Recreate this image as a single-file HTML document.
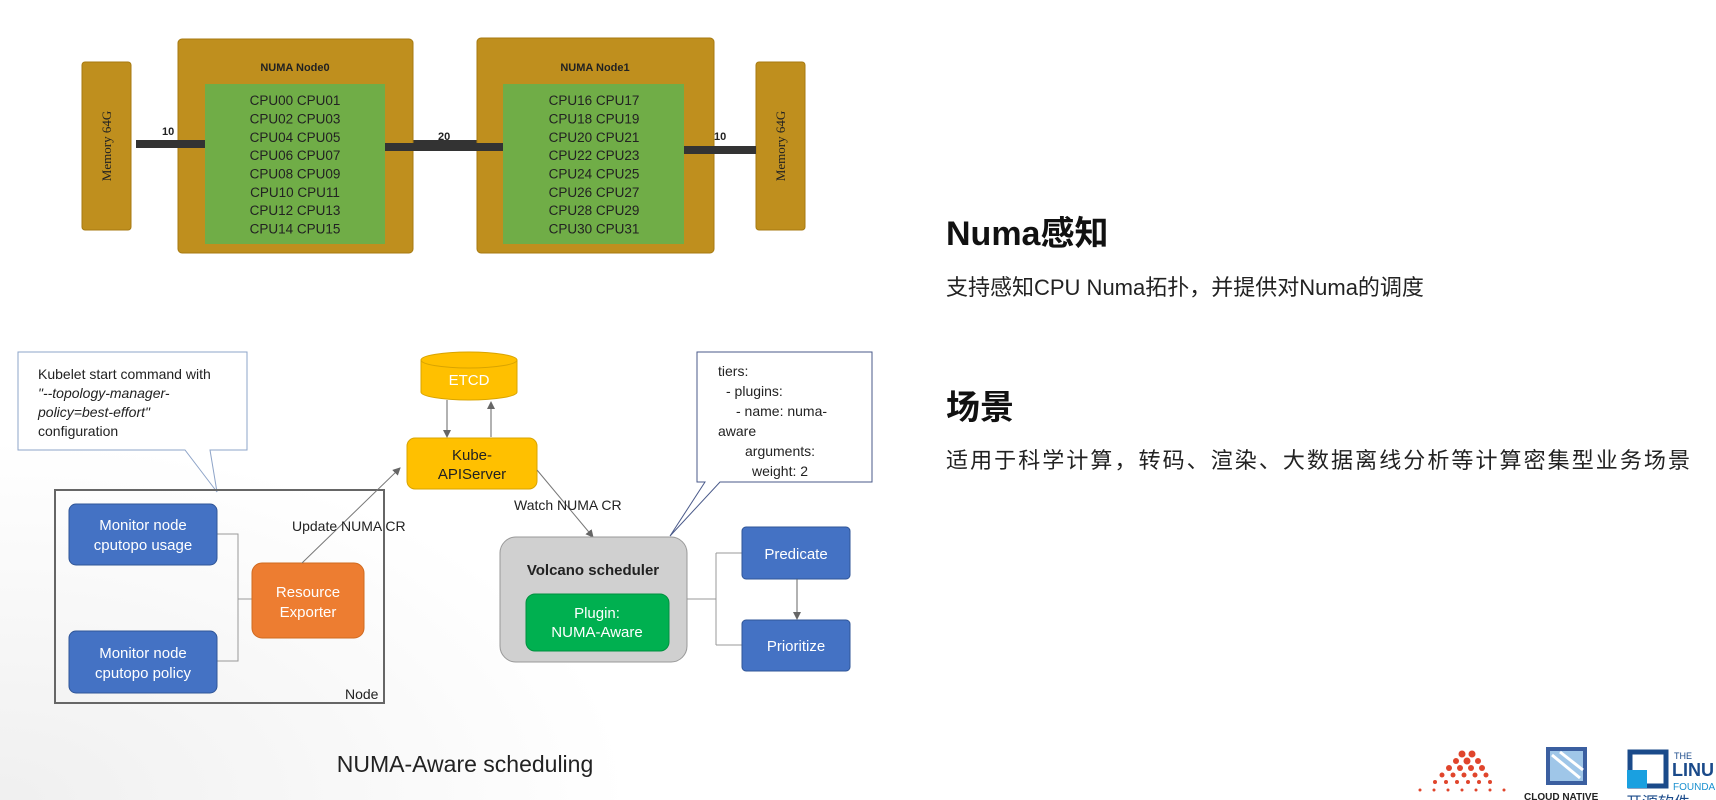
<!DOCTYPE html>
<html><head><meta charset="utf-8"><style>
html,body{margin:0;padding:0;background:#fff;width:1716px;height:800px;overflow:hidden}
svg{display:block}
.s{font-family:"Liberation Sans","Noto Sans CJK SC",sans-serif}
</style></head><body>
<svg width="1716" height="800" viewBox="0 0 1716 800" class="s">
<defs>
<radialGradient id="bg" cx="0" cy="1" r="0.9">
<stop offset="0" stop-color="#e9e9e9"/><stop offset="1" stop-color="#fff"/></radialGradient>
<marker id="ar" markerWidth="8" markerHeight="8" refX="7" refY="4" orient="auto" markerUnits="userSpaceOnUse"><path d="M0,0 L8,4 L0,8 z" fill="#666"/></marker>
</defs>
<rect x="0" y="0" width="1716" height="800" fill="#fff"/>
<rect x="0" y="400" width="700" height="400" fill="url(#bg)" opacity="0.7"/>

<!-- Top NUMA diagram -->
<rect x="136" y="140" width="380" height="8" fill="#333"/>
<rect x="380" y="143" width="110" height="8" fill="#333"/>
<rect x="680" y="146" width="80" height="8" fill="#333"/>
<rect x="82" y="62" width="49" height="168" rx="3" fill="#bf8f1e" stroke="#a77a10"/>
<rect x="756" y="62" width="49" height="168" rx="3" fill="#bf8f1e" stroke="#a77a10"/>
<text transform="translate(111,146) rotate(-90)" text-anchor="middle" font-family="Liberation Serif,serif" font-size="13" fill="#222">Memory  64G</text>
<text transform="translate(785,146) rotate(-90)" text-anchor="middle" font-family="Liberation Serif,serif" font-size="13" fill="#222">Memory  64G</text>
<rect x="178" y="39" width="235" height="214" rx="4" fill="#bf8f1e" stroke="#a77a10"/>
<rect x="477" y="38" width="237" height="215" rx="4" fill="#bf8f1e" stroke="#a77a10"/>
<rect x="205" y="84" width="180" height="160" fill="#70ad47"/>
<rect x="503" y="84" width="181" height="160" fill="#70ad47"/>
<rect x="136" y="140" width="69" height="8" fill="#333"/>
<rect x="385" y="143" width="118" height="8" fill="#333"/>
<rect x="684" y="146" width="72" height="8" fill="#333"/>
<text x="295" y="71" text-anchor="middle" font-size="11" font-weight="bold" fill="#222">NUMA Node0</text>
<text x="595" y="71" text-anchor="middle" font-size="11" font-weight="bold" fill="#222">NUMA Node1</text>
<g font-size="13.5" fill="#222" text-anchor="middle">
<text x="295" y="105">CPU00 CPU01</text><text x="295" y="123.5">CPU02 CPU03</text>
<text x="295" y="142">CPU04 CPU05</text><text x="295" y="160">CPU06 CPU07</text>
<text x="295" y="178.5">CPU08 CPU09</text><text x="295" y="197">CPU10 CPU11</text>
<text x="295" y="215">CPU12 CPU13</text><text x="295" y="233.5">CPU14 CPU15</text>
<text x="594" y="105">CPU16 CPU17</text><text x="594" y="123.5">CPU18 CPU19</text>
<text x="594" y="142">CPU20 CPU21</text><text x="594" y="160">CPU22 CPU23</text>
<text x="594" y="178.5">CPU24 CPU25</text><text x="594" y="197">CPU26 CPU27</text>
<text x="594" y="215">CPU28 CPU29</text><text x="594" y="233.5">CPU30 CPU31</text>
</g>
<g font-size="11" font-weight="bold" fill="#222">
<text x="162" y="135">10</text><text x="438" y="140">20</text><text x="714" y="140">10</text>
</g>

<!-- Bottom diagram -->
<path d="M18,352 H247 V450 H210 L217,492 L185,450 H18 Z" fill="#fff" stroke="#8ea4c8"/>
<g font-size="14" fill="#222">
<text x="38" y="379">Kubelet start command with</text>
<text x="38" y="398" font-style="italic">"--topology-manager-</text>
<text x="38" y="417" font-style="italic">policy=best-effort"</text>
<text x="38" y="436">configuration</text>
</g>
<rect x="55" y="490" width="329" height="213" fill="none" stroke="#666" stroke-width="2"/>
<text x="345" y="699" font-size="14" fill="#222">Node</text>
<path d="M217,534 H238 V661 H217 M238,599 H252" fill="none" stroke="#999"/>
<rect x="69" y="504" width="148" height="61" rx="7" fill="#4472c4" stroke="#2f5597"/>
<rect x="69" y="631" width="148" height="62" rx="7" fill="#4472c4" stroke="#2f5597"/>
<g font-size="15" fill="#fff" text-anchor="middle">
<text x="143" y="530">Monitor node</text><text x="143" y="550">cputopo usage</text>
<text x="143" y="658">Monitor node</text><text x="143" y="678">cputopo policy</text>
</g>
<rect x="252" y="563" width="112" height="75" rx="10" fill="#ed7d31" stroke="#d06a20"/>
<text x="308" y="597" font-size="15" fill="#fff" text-anchor="middle">Resource</text>
<text x="308" y="617" font-size="15" fill="#fff" text-anchor="middle">Exporter</text>
<line x1="302" y1="563" x2="400" y2="468" stroke="#777" marker-end="url(#ar)"/>
<text x="292" y="531" font-size="14" fill="#222">Update NUMA CR</text>

<path d="M421,360 V392 A48,8 0 0 0 517,392 V360" fill="#ffc000" stroke="#d9a400"/>
<ellipse cx="469" cy="360" rx="48" ry="8" fill="#ffc000" stroke="#d9a400"/>
<text x="469" y="385" font-size="15" fill="#fff" text-anchor="middle">ETCD</text>
<line x1="447" y1="400" x2="447" y2="437" stroke="#666" marker-end="url(#ar)"/>
<line x1="491" y1="437" x2="491" y2="402" stroke="#666" marker-end="url(#ar)"/>
<rect x="407" y="438" width="130" height="51" rx="8" fill="#ffc000" stroke="#d9a400"/>
<text x="472" y="460" font-size="15" fill="#222" text-anchor="middle">Kube-</text>
<text x="472" y="479" font-size="15" fill="#222" text-anchor="middle">APIServer</text>
<line x1="537" y1="470" x2="593" y2="537" stroke="#777" marker-end="url(#ar)"/>
<text x="514" y="510" font-size="14" fill="#222">Watch NUMA CR</text>

<path d="M697,352 H872 V482 H720 L670,536 L705,482 H697 Z" fill="#fff" stroke="#4a5a8a"/>
<g font-size="14" fill="#222">
<text x="718" y="376">tiers:</text><text x="726" y="396">- plugins:</text>
<text x="736" y="416">- name: numa-</text><text x="718" y="436">aware</text>
<text x="745" y="456">arguments:</text><text x="752" y="476">weight: 2</text>
</g>
<rect x="500" y="537" width="187" height="125" rx="16" fill="#d0d0d0" stroke="#999"/>
<text x="593" y="575" font-size="15" font-weight="bold" fill="#222" text-anchor="middle">Volcano scheduler</text>
<rect x="526" y="594" width="143" height="57" rx="9" fill="#00b050" stroke="#00913f"/>
<text x="597" y="618" font-size="15" fill="#fff" text-anchor="middle">Plugin:</text>
<text x="597" y="637" font-size="15" fill="#fff" text-anchor="middle">NUMA-Aware</text>
<path d="M687,599 H716 M716,553 V645 M716,553 H742 M716,645 H742" fill="none" stroke="#999"/>
<rect x="742" y="527" width="108" height="52" rx="4" fill="#4472c4" stroke="#2f5597"/>
<rect x="742" y="620" width="108" height="51" rx="4" fill="#4472c4" stroke="#2f5597"/>
<text x="796" y="559" font-size="15" fill="#fff" text-anchor="middle">Predicate</text>
<text x="796" y="651" font-size="15" fill="#fff" text-anchor="middle">Prioritize</text>
<line x1="797" y1="579" x2="797" y2="619" stroke="#666" marker-end="url(#ar)"/>

<text x="465" y="772" font-size="23" fill="#222" text-anchor="middle">NUMA-Aware scheduling</text>

<!-- Right text -->
<text x="946" y="245" font-size="34" font-weight="bold" fill="#111">Numa感知</text>
<text x="946" y="295" font-size="22" fill="#222">支持感知CPU Numa拓扑，并提供对Numa的调度</text>
<text x="946" y="419" font-size="34" font-weight="bold" fill="#111">场景</text>
<text x="946" y="468" font-size="22" fill="#222" textLength="744">适用于科学计算，转码、渲染、大数据离线分析等计算密集型业务场景</text>

<!-- Logos -->
<g fill="#e0452c">
<circle cx="1462" cy="754" r="3.5"/><circle cx="1472" cy="754" r="3.5"/>
<circle cx="1456" cy="761" r="3"/><circle cx="1467" cy="761" r="3.5"/><circle cx="1478" cy="761" r="3"/>
<circle cx="1449" cy="768" r="3"/><circle cx="1460" cy="768" r="3"/><circle cx="1471" cy="768" r="3"/><circle cx="1482" cy="768" r="3"/>
<circle cx="1442" cy="775" r="2.5"/><circle cx="1453" cy="775" r="2.5"/><circle cx="1464" cy="775" r="2.5"/><circle cx="1475" cy="775" r="2.5"/><circle cx="1486" cy="775" r="2.5"/>
<circle cx="1435" cy="782" r="2"/><circle cx="1446" cy="782" r="2"/><circle cx="1457" cy="782" r="2"/><circle cx="1468" cy="782" r="2"/><circle cx="1479" cy="782" r="2"/><circle cx="1490" cy="782" r="2"/>
<circle cx="1420" cy="790" r="1.5"/><circle cx="1434" cy="790" r="1.5"/><circle cx="1448" cy="790" r="1.5"/><circle cx="1462" cy="790" r="1.5"/><circle cx="1476" cy="790" r="1.5"/><circle cx="1490" cy="790" r="1.5"/><circle cx="1504" cy="790" r="1.5"/>
</g>
<rect x="1548" y="749" width="37" height="34" fill="#9fc6e8" stroke="#3b5fa0" stroke-width="4"/>
<path d="M1552,755 L1580,778 M1560,752 L1583,770" stroke="#fff" stroke-width="3"/>
<text x="1524" y="800" font-size="10" font-weight="bold" fill="#222">CLOUD NATIVE</text>
<rect x="1630" y="752" width="36" height="34" fill="none" stroke="#1a4a8a" stroke-width="5"/>
<rect x="1627" y="770" width="20" height="18" fill="#1aa0e0"/>
<text x="1674" y="759" font-size="9" fill="#1a4a8a">THE</text>
<text x="1672" y="776" font-size="18" font-weight="bold" fill="#1a4a8a">LINU</text>
<text x="1673" y="790" font-size="10" fill="#1a90d0">FOUNDA</text>
<text x="1626" y="808" font-size="16" fill="#1a4a8a">开源软件</text>
</svg>
</body></html>
